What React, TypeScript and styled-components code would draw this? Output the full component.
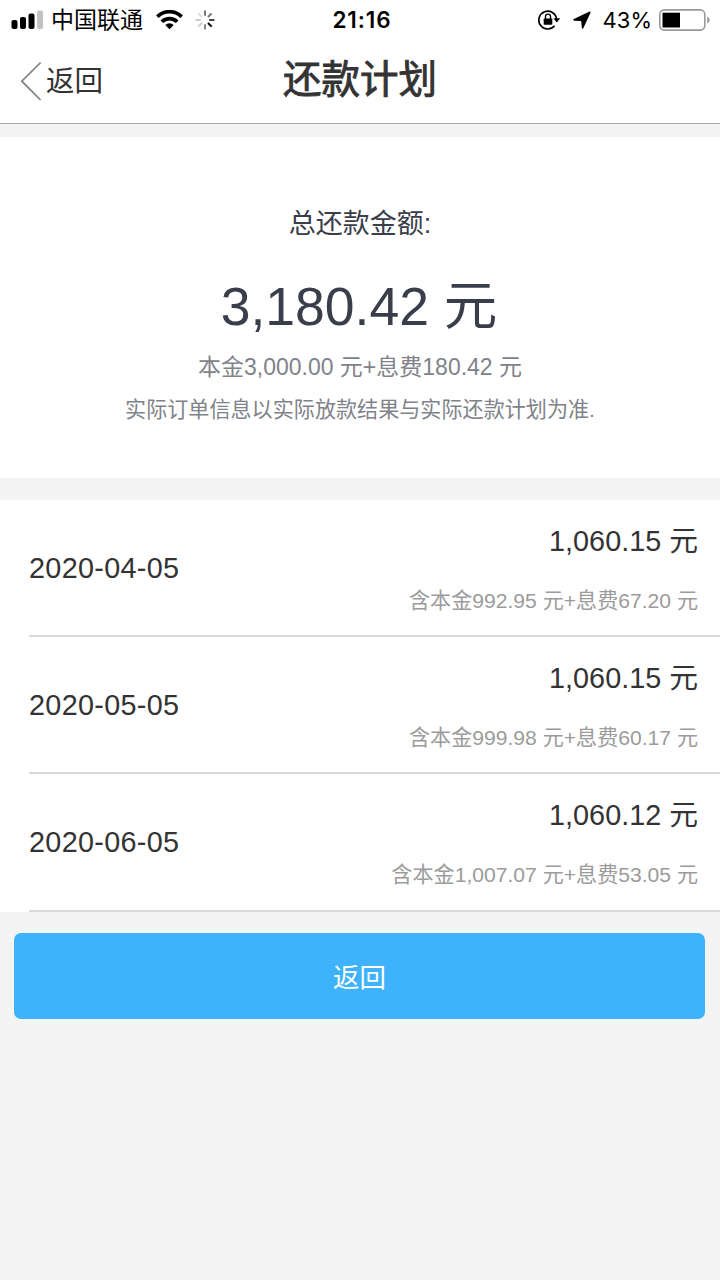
import React from 'react';
import styled, { createGlobalStyle } from 'styled-components';

const GlobalStyle = createGlobalStyle`
  * { box-sizing: border-box; }
  body {
    margin: 0;
    background: #f4f4f4;
    font-family: "Liberation Sans", "Noto Sans CJK SC", sans-serif;
  }
`;

const Page = styled.main`
  display: flex;
  flex-direction: column;
  width: 720px;
  min-height: 1280px;
  background: #f4f4f4;
`;

const StatusBar = styled.div`
  display: grid;
  grid-template-columns: 1fr auto 1fr;
  align-items: center;
  height: 40px;
  padding: 0 11px 0 11px;
  background: #fff;
  color: #000;
`;

const StatusGroup = styled.div<{ $end?: boolean }>`
  display: flex;
  align-items: center;
  gap: 12px;
  height: 40px;
  justify-content: ${(p) => (p.$end ? 'flex-end' : 'flex-start')};
  ${(p) => p.$end && 'margin-right: -2px;'}
  svg { display: block; flex: none; }
`;

const Carrier = styled.span`
  margin: 0 1px 0 -4px;
  font: 23px/40px "Noto Sans CJK SC", sans-serif;
  padding-bottom: 4px;
`;

const Clock = styled.span`
  padding-left: 4px;
  font: 600 22.5px/40px Inter, sans-serif;
  letter-spacing: 0.9px;
`;

const Percent = styled.span`
  margin-right: -5px;
  font: 22px/40px Inter, sans-serif;
`;

const NavBar = styled.header`
  display: grid;
  grid-template-columns: 1fr auto 1fr;
  height: 84px;
  padding: 0 20px;
  background: #fff;
  border-bottom: 1px solid #a9a9a9;
  color: #333;
`;

const BackLink = styled.a`
  display: flex;
  align-items: center;
  gap: 4px;
  height: 81px;
  font-size: 28.5px;
  line-height: 40px;
  svg { display: block; }
`;

const BackLabel = styled.span`
  padding-top: 1px;
`;

const Title = styled.h1`
  margin: 0;
  font: 400 38.5px/73px "Noto Sans CJK SC", sans-serif;
  -webkit-text-stroke: 0.9px #333;
`;

const Summary = styled.section`
  display: flex;
  flex-direction: column;
  align-items: center;
  height: 341px;
  margin: 13px 0 22px;
  padding-top: 67px;
  background: #fff;
  color: #3a3d4a;
`;

const SummaryLabel = styled.div`
  font-size: 27px;
  line-height: 40px;
`;

const Total = styled.div`
  margin: 23px 0 0;
  padding-right: 2px;
  font-size: 53.5px;
  line-height: 80px;
`;

const Note = styled.div<{ $size: number; $line: number }>`
  font-size: ${(p) => p.$size}px;
  line-height: ${(p) => p.$line}px;
  color: #808289;
`;

const Plan = styled.ul`
  margin: 0;
  padding: 0 0 0 29px;
  list-style: none;
  background: #fff;
`;

const Row = styled.li`
  display: flex;
  justify-content: space-between;
  align-items: center;
  height: 137.2px;
  padding-right: 22px;
  border-bottom: 2px solid #d9d9d9;
  color: #333;
`;

const DueDate = styled.span`
  padding-top: 1px;
  font-size: 28.8px;
  letter-spacing: 0.3px;
`;

const Amounts = styled.div`
  display: flex;
  flex-direction: column;
  align-items: flex-end;
  gap: 20px;
  padding-top: 6px;
`;

const Amount = styled.span`
  font-size: 28.8px;
  line-height: 40px;
`;

const Detail = styled.span`
  font-size: 21.1px;
  line-height: 40px;
  color: #9b9b9b;
`;

const ReturnButton = styled.button`
  height: 86px;
  margin: 21px 15px 0 14px;
  border: 0;
  border-radius: 7px;
  background: #3eb2fa;
  color: #fff;
  font: 26.5px/86px "Noto Sans CJK SC", sans-serif;
  padding: 0;
`;

const installments = [
  { date: '2020-04-05', amount: '1,060.15', principal: '992.95', fee: '67.20' },
  { date: '2020-05-05', amount: '1,060.15', principal: '999.98', fee: '60.17' },
  { date: '2020-06-05', amount: '1,060.12', principal: '1,007.07', fee: '53.05' },
];

const SignalIcon = () => (
  <svg width="32" height="20" viewBox="0 0 32 20">
    <rect x="0.5" y="10" width="6" height="9" rx="2" />
    <rect x="9" y="7" width="6" height="12" rx="2" />
    <rect x="17.5" y="3.5" width="6" height="15.5" rx="2" />
    <rect x="26" y="0.5" width="6" height="18.5" rx="2" fill="#c2c2c2" />
  </svg>
);

const WifiIcon = () => (
  <svg width="27" height="20" viewBox="0 0 27 20">
    <g fill="none" stroke="#000" strokeWidth="3.7">
      <path d="M1.4 6.7a17.2 17.2 0 0 1 24.2 0" />
      <path d="M5.8 11.7a11 11 0 0 1 15.4 0" />
    </g>
    <path d="M9.3 15a6.2 6.2 0 0 1 8.4 0L13.5 19.2Z" />
  </svg>
);

const spokes = ['#777', '#777', '#444', '#000', '#888', '#ccc', '#ccc', '#ddd'];

const SpinnerIcon = () => (
  <svg width="20" height="20" viewBox="-10 -10 20 20">
    {spokes.map((color, i) => (
      <path key={i} d="M0-4.2V-9.4" stroke={color} strokeWidth="2" transform={`rotate(${i * 45})`} />
    ))}
  </svg>
);

const RotationLockIcon = () => (
  <svg width="23" height="22" viewBox="0 0 23 22">
    <path d="M18.6 10A8.9 8.9 0 1 0 16.6 16.8" fill="none" stroke="#000" strokeWidth="1.7" />
    <path d="M15.4 9.2H22.2L18.8 13.4Z" />
    <rect x="5.7" y="9.4" width="8.6" height="6.4" rx="0.8" />
    <path d="M7.5 10V7.6a2.5 2.5 0 0 1 5 0V10" fill="none" stroke="#000" strokeWidth="1.4" />
  </svg>
);

const LocationIcon = () => (
  <svg width="18" height="18" viewBox="0 0 18 18">
    <path d="M16.6.5.8 8C-.1 8.5 0 9.6 1.2 9.7L7.6 10q.7 0 .7.7L8.8 16.8c.1 1.2 1.1 1.3 1.6.2L17.6 1.4C17.9.6 17.3.2 16.6.5Z" />
  </svg>
);

const BatteryIcon = () => (
  <svg width="52" height="22" viewBox="0 0 52 22">
    <rect x="0.8" y="0.9" width="45" height="20.2" rx="4.5" fill="none" stroke="#999" strokeWidth="1.6" />
    <rect x="3.5" y="3.7" width="17.5" height="14.8" />
    <path d="M48.2 7.5q2.6 1 2.6 3.5t-2.6 3.5Z" fill="#999" />
  </svg>
);

const BackIcon = () => (
  <svg width="22" height="40" viewBox="0 0 22 40">
    <path d="M20.6 1.5 1.8 20.2 20.6 39" fill="none" stroke="#808080" strokeWidth="1.7" />
  </svg>
);

export default function App() {
  return (
    <>
      <GlobalStyle />
      <Page>
        <StatusBar>
          <StatusGroup>
            <SignalIcon />
            <Carrier>中国联通</Carrier>
            <WifiIcon />
            <SpinnerIcon />
          </StatusGroup>
          <Clock>21:16</Clock>
          <StatusGroup $end>
            <RotationLockIcon />
            <LocationIcon />
            <Percent>43%</Percent>
            <BatteryIcon />
          </StatusGroup>
        </StatusBar>
        <NavBar>
          <BackLink>
            <BackIcon />
            <BackLabel>返回</BackLabel>
          </BackLink>
          <Title>还款计划</Title>
        </NavBar>
        <Summary>
          <SummaryLabel>总还款金额:</SummaryLabel>
          <Total>3,180.42 元</Total>
          <Note $size={23} $line={40}>本金3,000.00 元+息费180.42 元</Note>
          <Note $size={21.1} $line={45}>实际订单信息以实际放款结果与实际还款计划为准.</Note>
        </Summary>
        <Plan>
          {installments.map((item) => (
            <Row key={item.date}>
              <DueDate>{item.date}</DueDate>
              <Amounts>
                <Amount>{item.amount} 元</Amount>
                <Detail>含本金{item.principal} 元+息费{item.fee} 元</Detail>
              </Amounts>
            </Row>
          ))}
        </Plan>
        <ReturnButton>返回</ReturnButton>
      </Page>
    </>
  );
}
